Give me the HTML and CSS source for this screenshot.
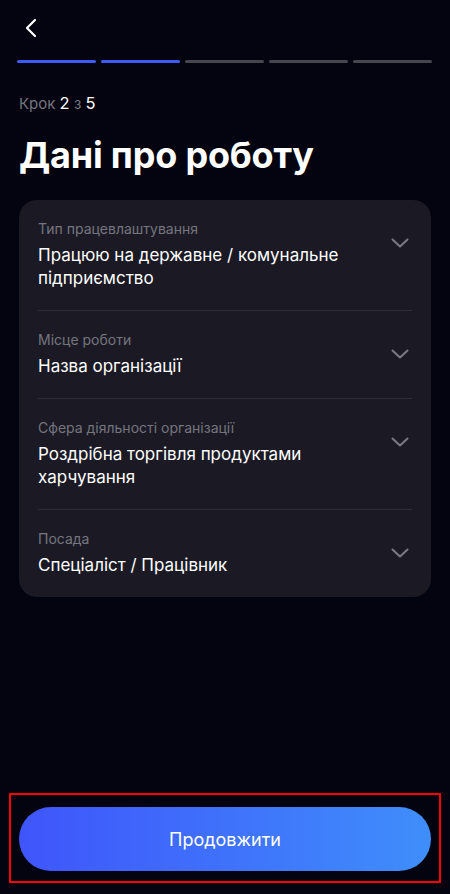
FILE: index.html
```html
<!DOCTYPE html>
<html lang="uk">
<head>
  <meta charset="UTF-8">
  <title>Дані про роботу</title>
  <link rel="stylesheet" href="styles.css">
</head>
<body>

  <div class="page">
    <div class="top-bar">
      <button class="back" aria-label="Назад">
        <svg width="12" height="20" viewBox="0 0 12 20">
          <path d="M10 2 L2 10 L10 18" fill="none" stroke="#fff" stroke-width="2.2" stroke-linecap="round" stroke-linejoin="round"/>
        </svg>
      </button>
    </div>

    <div class="progress">
      <span class="seg done"></span>
      <span class="seg done"></span>
      <span class="seg"></span>
      <span class="seg"></span>
      <span class="seg"></span>
    </div>

    <p class="step">Крок <b>2</b> з <b>5</b></p>

    <h1>Дані про роботу</h1>

    <div class="card">
      <div class="row">
        <div class="field">
          <div class="label">Тип працевлаштування</div>
          <div class="value">Працюю на державне / комунальне підприємство</div>
        </div>
        <svg class="chev" width="18" height="10" viewBox="0 0 18 10">
          <path d="M1.5 1.5 L9 8.5 L16.5 1.5" fill="none" stroke="#7b7b86" stroke-width="2" stroke-linecap="round" stroke-linejoin="round"/>
        </svg>
      </div>
      <div class="row">
        <div class="field">
          <div class="label">Місце роботи</div>
          <div class="value">Назва організації</div>
        </div>
        <svg class="chev" width="18" height="10" viewBox="0 0 18 10">
          <path d="M1.5 1.5 L9 8.5 L16.5 1.5" fill="none" stroke="#7b7b86" stroke-width="2" stroke-linecap="round" stroke-linejoin="round"/>
        </svg>
      </div>
      <div class="row">
        <div class="field">
          <div class="label">Сфера діяльності організації</div>
          <div class="value">Роздрібна торгівля продуктами харчування</div>
        </div>
        <svg class="chev" width="18" height="10" viewBox="0 0 18 10">
          <path d="M1.5 1.5 L9 8.5 L16.5 1.5" fill="none" stroke="#7b7b86" stroke-width="2" stroke-linecap="round" stroke-linejoin="round"/>
        </svg>
      </div>
      <div class="row">
        <div class="field">
          <div class="label">Посада</div>
          <div class="value">Спеціаліст / Працівник</div>
        </div>
        <svg class="chev" width="18" height="10" viewBox="0 0 18 10">
          <path d="M1.5 1.5 L9 8.5 L16.5 1.5" fill="none" stroke="#7b7b86" stroke-width="2" stroke-linecap="round" stroke-linejoin="round"/>
        </svg>
      </div>
    </div>

    <div class="footer">
      <button class="next">Продовжити</button>
    </div>
  </div>

</body>
</html>
```

FILE: styles.css
```css
body {
  margin: 0;
  background: #03040f;
  color: #fff;
  font-family: Inter, "Noto Sans", sans-serif;
}

.page {
  min-height: 894px;
  display: flex;
  flex-direction: column;
}

.top-bar {
  height: 52px;
  display: flex;
  align-items: center;
  padding-left: 24px;
  padding-top: 2px;
}

.back {
  background: none;
  border: 0;
  padding: 0;
  width: 14px;
  height: 22px;
  display: flex;
  align-items: center;
  justify-content: center;
  cursor: pointer;
}

.progress {
  display: flex;
  gap: 5px;
  margin: 6px 18px 0 17px;
}

.seg {
  flex: 1;
  height: 3px;
  border-radius: 2px;
  background: #45464e;
}

.seg.done {
  background: #3f5bf6;
}

.step {
  margin: 31px 19px 0;
  height: 18px;
  font-size: 15px;
  line-height: 18px;
  color: #75757f;
}

.step b {
  font-weight: 400;
  font-size: 16.5px;
  color: #fff;
}

h1 {
  margin: 21px 19px 0;
  font-size: 36px;
  line-height: 44px;
  font-weight: 700;
  letter-spacing: -0.2px;
}

.card {
  margin: 23px 19px 0;
  padding: 0 19px;
  background: #1b1a24;
  border-radius: 18px;
}

.row {
  display: flex;
  align-items: flex-start;
  gap: 12px;
  padding: 20px 0;
  border-bottom: 1px solid #2d2c37;
}

.row:last-child {
  border-bottom: 0;
}

.field {
  flex: 1;
}

.label {
  font-size: 14px;
  line-height: 18px;
  color: #75757f;
}

.value {
  margin-top: 6px;
  font-size: 17px;
  line-height: 23px;
  color: #fff;
  padding-right: 40px;
}

.chev {
  margin-top: 18px;
  margin-right: 3px;
  flex-shrink: 0;
}

.footer {
  margin: auto 9px 11px;
  padding: 12px 8px 10px;
  border: 2px solid #ff0000;
}

.next {
  display: block;
  width: 100%;
  height: 64px;
  border: 0;
  border-radius: 32px;
  background: linear-gradient(90deg, #3f55fb, #3f8efb);
  color: #fff;
  font-family: Inter, "Noto Sans", sans-serif;
  font-size: 18px;
  cursor: pointer;
}
```
